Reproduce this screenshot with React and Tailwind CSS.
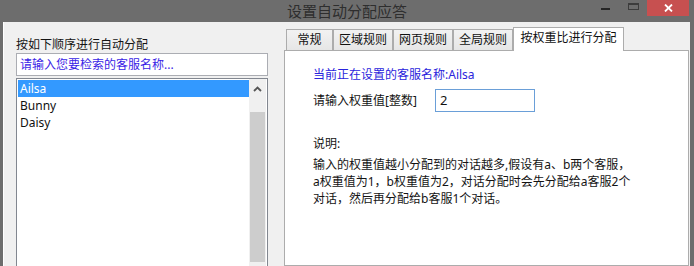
const font = { fontFamily: '"Noto Sans", "Noto Sans CJK SC", sans-serif' };

const TitleBar = () => (
  <div className="relative h-[22px] flex-none flex items-center justify-center">
    <span className="text-[15px] leading-[20px] text-[#2e2e2e]">设置自动分配应答</span>
    {/* window buttons, cut off at the top of the shot */}
    <div className="absolute top-0 right-[5px] flex items-start">
      <div className="w-[9px] h-[2px] bg-[#262626] mt-[8px] mr-[18px]" />
      <div className="w-[11px] h-[7px] border border-[#3c3c3c] border-t-2 mt-[3px] mr-[8px]" />
      <div className="w-[42px] h-[16px] bg-[#c75050] flex items-center justify-center">
        <svg width="9" height="8" viewBox="0 0 9 8">
          <path d="M1 0.5 L8 7.5 M8 0.5 L1 7.5" stroke="#fff" strokeWidth="1.8" />
        </svg>
      </div>
    </div>
  </div>
);

const Tab = ({ label, w }) => (
  <div
    className={`${w} h-[21px] flex-none border border-b-0 border-[#acacac] bg-gradient-to-b from-[#f2f2f2] to-[#e6e6e6] text-[12px] leading-[19px] text-[#111] text-center`}
  >
    {label}
  </div>
);

export default function App() {
  const agents = ['Ailsa', 'Bunny', 'Daisy'];

  return (
    <div className="w-[694px] h-[266px] overflow-hidden bg-[#6d6d6d] flex flex-col" style={font}>
      <TitleBar />

      <div className="flex-1 min-h-0 flex ml-[3px] mr-[4px] bg-[#f0f0f0] border-l border-white">
        {/* Left: ordering list */}
        <div className="w-[280px] flex-none pl-[12px] pt-[14px] flex flex-col overflow-hidden">
          <div className="text-[12px] leading-[17px] text-[#141414]">按如下顺序进行自动分配</div>
          <div className="w-[252px] h-[23px] flex-none border border-[#abadb3] bg-white pl-[3px] text-[12px] leading-[21px] text-[#3a1ee6]">
            请输入您要检索的客服名称...
          </div>
          <div className="w-[252px] h-[220px] flex-none mt-[2px] border border-[#828790] bg-white flex">
            <div className="w-[231px] ml-[1px] pt-[1px]">
              {agents.map((name, i) => (
                <div
                  key={name}
                  className={`h-[17px] pl-[2px] text-[12px] leading-[17px] ${
                    i === 0 ? 'bg-[#3399ff] text-white' : 'text-[#111]'
                  }`}
                >
                  {name}
                </div>
              ))}
            </div>
            <div className="w-[17px] bg-[#f0f0f0] flex flex-col">
              <div className="h-[17px] mt-[1px] flex items-center justify-center">
                <svg width="9" height="6" viewBox="0 0 9 6">
                  <path d="M1 5 L4.5 1.5 L8 5" stroke="#555" strokeWidth="1.8" fill="none" />
                </svg>
              </div>
              <div className="h-[150px] mt-[15px] mx-[1px] bg-[#cdcdcd]" />
            </div>
            <div className="w-[1px] bg-white" />
          </div>
        </div>

        {/* Right: tab control */}
        <div className="w-[406px] flex-none flex flex-col">
          <div className="h-[28px] flex-none flex items-end pl-[2px]">
            <Tab label="常规" w="w-[47px]" />
            <Tab label="区域规则" w="w-[60px]" />
            <Tab label="网页规则" w="w-[60px]" />
            <Tab label="全局规则" w="w-[60px]" />
            <div className="relative z-10 w-[111px] h-[24px] -mb-[1px] flex-none border border-b-0 border-[#acacac] bg-white text-[12px] leading-[20px] text-[#111] text-center">
              按权重比进行分配
            </div>
          </div>
          <div className="w-[405px] flex-1 border border-[#acacac] bg-white pl-[28px] pt-[15px] text-[12px]">
            <div className="leading-[17px] text-[#2a24dc]">当前正在设置的客服名称:Ailsa</div>
            <div className="mt-[6px] flex items-center">
              <span className="w-[122px] leading-[17px] text-[#141414]">请输入权重值[整数]</span>
              <div className="w-[100px] h-[23px] border border-[#6a9fd8] pl-[4px] text-[13px] leading-[21px] text-[#111]">
                2
              </div>
            </div>
            <div className="mt-[23px] leading-[17px] text-[#141414]">说明:</div>
            <p className="mt-[4px] leading-[17px] text-[#141414] whitespace-nowrap">
              输入的权重值越小分配到的对话越多,假设有a、b两个客服，
              <br />
              a权重值为1，b权重值为2，对话分配时会先分配给a客服2个
              <br />
              对话，然后再分配给b客服1个对话。
            </p>
          </div>
        </div>
      </div>
    </div>
  );
}
